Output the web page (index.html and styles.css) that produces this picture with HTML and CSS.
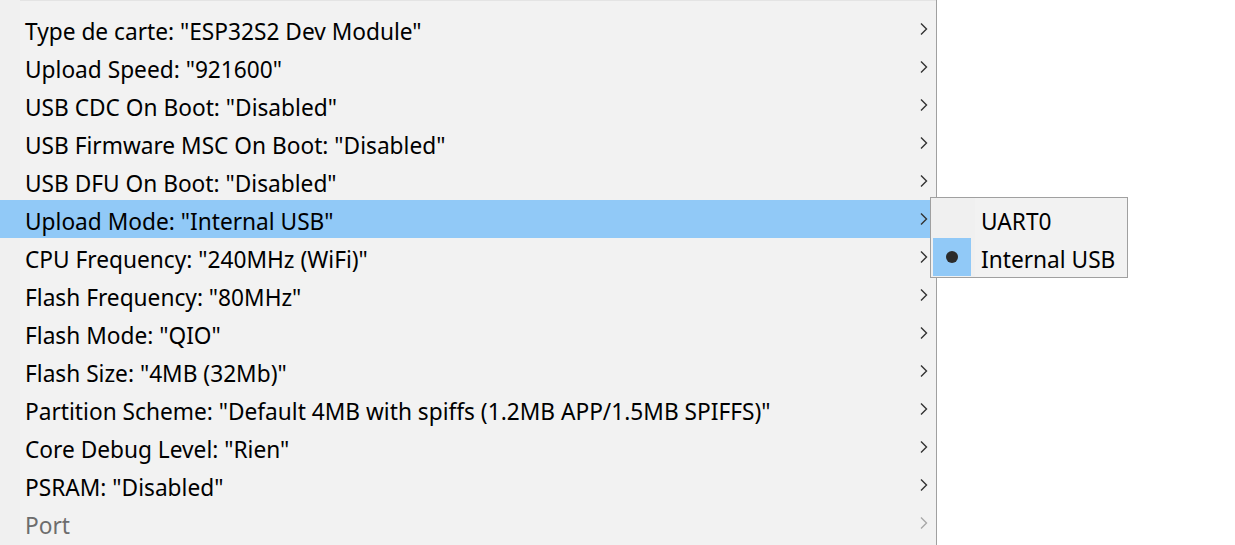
FILE: index.html
```html
<!DOCTYPE html>
<html>
<head>
<meta charset="utf-8">
<link rel="stylesheet" href="styles.css">
</head>
<body>
<div class="menu">
  <div class="row"><span class="label">Type de carte: "ESP32S2 Dev Module"</span><svg class="chev" viewBox="0 0 8 12"><path d="M1 0.5 L6.5 6 L1 11.5"/></svg></div>
  <div class="row"><span class="label">Upload Speed: "921600"</span><svg class="chev" viewBox="0 0 8 12"><path d="M1 0.5 L6.5 6 L1 11.5"/></svg></div>
  <div class="row"><span class="label">USB CDC On Boot: "Disabled"</span><svg class="chev" viewBox="0 0 8 12"><path d="M1 0.5 L6.5 6 L1 11.5"/></svg></div>
  <div class="row"><span class="label">USB Firmware MSC On Boot: "Disabled"</span><svg class="chev" viewBox="0 0 8 12"><path d="M1 0.5 L6.5 6 L1 11.5"/></svg></div>
  <div class="row"><span class="label">USB DFU On Boot: "Disabled"</span><svg class="chev" viewBox="0 0 8 12"><path d="M1 0.5 L6.5 6 L1 11.5"/></svg></div>
  <div class="row active"><span class="label">Upload Mode: "Internal USB"</span><svg class="chev" viewBox="0 0 8 12"><path d="M1 0.5 L6.5 6 L1 11.5"/></svg></div>
  <div class="row"><span class="label">CPU Frequency: "240MHz (WiFi)"</span><svg class="chev" viewBox="0 0 8 12"><path d="M1 0.5 L6.5 6 L1 11.5"/></svg></div>
  <div class="row"><span class="label">Flash Frequency: "80MHz"</span><svg class="chev" viewBox="0 0 8 12"><path d="M1 0.5 L6.5 6 L1 11.5"/></svg></div>
  <div class="row"><span class="label">Flash Mode: "QIO"</span><svg class="chev" viewBox="0 0 8 12"><path d="M1 0.5 L6.5 6 L1 11.5"/></svg></div>
  <div class="row"><span class="label">Flash Size: "4MB (32Mb)"</span><svg class="chev" viewBox="0 0 8 12"><path d="M1 0.5 L6.5 6 L1 11.5"/></svg></div>
  <div class="row"><span class="label">Partition Scheme: "Default 4MB with spiffs (1.2MB APP/1.5MB SPIFFS)"</span><svg class="chev" viewBox="0 0 8 12"><path d="M1 0.5 L6.5 6 L1 11.5"/></svg></div>
  <div class="row"><span class="label">Core Debug Level: "Rien"</span><svg class="chev" viewBox="0 0 8 12"><path d="M1 0.5 L6.5 6 L1 11.5"/></svg></div>
  <div class="row"><span class="label">PSRAM: "Disabled"</span><svg class="chev" viewBox="0 0 8 12"><path d="M1 0.5 L6.5 6 L1 11.5"/></svg></div>
  <div class="row disabled"><span class="label">Port</span><svg class="chev" viewBox="0 0 8 12"><path d="M1 0.5 L6.5 6 L1 11.5"/></svg></div>
</div>
<div class="submenu">
  <div class="subrow"><span class="gutter"></span><span class="label">UART0</span></div>
  <div class="subrow"><span class="gutter checked"><span class="dot"></span></span><span class="label">Internal USB</span></div>
</div>
</body>
</html>
```

FILE: styles.css
```css
html, body {
  margin: 0;
  padding: 0;
  background: #ffffff;
  height: 545px;
  overflow: hidden;
}

body {
  font-family: "Noto Sans", "Open Sans", sans-serif;
  font-size: 22.7px;
  color: #000000;
  position: relative;
}

.menu {
  width: 937px;
  height: 545px;
  border-right: 1px solid #a0a0a0;
  background: linear-gradient(to right, #f0f0f0 0, #f0f0f0 20px, #f2f2f2 20px);
  padding-top: 10px;
  box-sizing: border-box;
  position: relative;
}

.menu::before {
  content: "";
  position: absolute;
  left: 20px;
  right: 0;
  top: 0;
  height: 1px;
  background: #e4e4e4;
}

.row {
  height: 38px;
  display: flex;
  align-items: center;
  justify-content: space-between;
  padding-left: 25px;
  padding-right: 8px;
  white-space: nowrap;
}

.label {
  line-height: 38px;
  padding-top: 3px;
  height: 38px;
  box-sizing: border-box;
}

.row.active {
  background: #91c9f7;
}

.row.disabled .label {
  color: #6d6d6d;
}

.chev {
  width: 8px;
  height: 12px;
  fill: none;
  stroke: #333333;
  stroke-width: 1.4;
}

.row.disabled .chev {
  stroke: #a8a8a8;
}

.submenu {
  position: absolute;
  left: 930px;
  top: 197px;
  width: 194px;
  border: 1px solid #a0a0a0;
  background: linear-gradient(to right, #f0f0f0 0, #f0f0f0 44px, #f2f2f2 44px);
  padding: 2px 0 1px 2px;
}

.subrow {
  height: 38px;
  display: flex;
  align-items: center;
  white-space: nowrap;
}

.gutter {
  width: 38px;
  height: 38px;
  display: flex;
  align-items: center;
  justify-content: center;
  margin-right: 10px;
}

.gutter.checked {
  background: #91c9f7;
}

.dot {
  width: 12px;
  height: 12px;
  border-radius: 50%;
  background: #2b2b2b;
}
```
